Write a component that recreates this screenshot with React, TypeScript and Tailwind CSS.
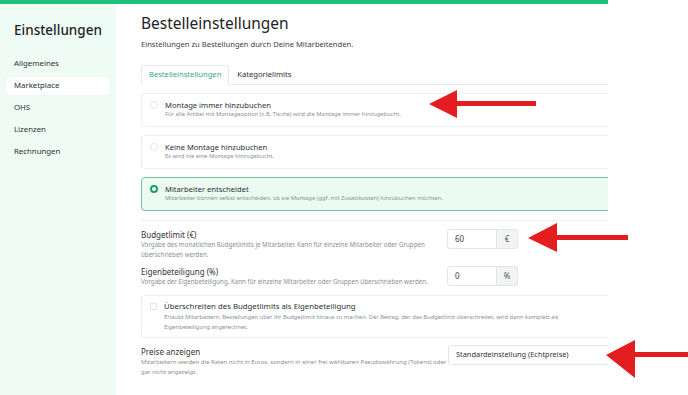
import { type ReactNode } from 'react';

const navItems = ['Allgemeines', 'Marketplace', 'OHS', 'Lizenzen', 'Rechnungen'];

const montageOptions = [
  {
    title: 'Montage immer hinzubuchen',
    text: 'Für alle Artikel mit Montageoption (z.B. Tische) wird die Montage immer hinzugebucht.',
    selected: false
  },
  {
    title: 'Keine Montage hinzubuchen',
    text: 'Es wird nie eine Montage hinzugebucht.',
    selected: false
  },
  {
    title: 'Mitarbeiter entscheidet',
    text: 'Mitarbeiter können selbst entscheiden, ob sie Montage (ggf. mit Zusatzkosten) hinzubuchen möchten.',
    selected: true
  }
];

function Radio({ checked }: { checked: boolean }) {
  return checked ? (
    <span className="mt-[1px] h-[8px] w-[8px] shrink-0 rounded-full border-[2px] border-[#1e9e63] bg-white" />
  ) : (
    <span className="mt-[1px] h-[8px] w-[8px] shrink-0 rounded-full border border-[#e3e6e8] bg-white" />
  );
}

function SettingRow({ label, children, field }: { label: string; children: ReactNode; field: ReactNode }) {
  return (
    <div className="flex items-start">
      <div className="w-[300px] shrink-0">
        <p className="text-[8px] leading-[11px] text-[#333]">{label}</p>
        <p className="whitespace-nowrap text-[6.2px] leading-[10px] text-[#8a8f94]">{children}</p>
      </div>
      <div className="ml-[6px]">{field}</div>
    </div>
  );
}

function AddonInput({ value, unit }: { value: string; unit: string }) {
  return (
    <div className="flex h-[20px]">
      <div className="flex w-[50px] items-center rounded-l-[3px] border border-[#e3e6e8] bg-white pl-[7px] text-[8px] text-[#444]">
        {value}
      </div>
      <div className="flex w-[21px] items-center justify-center rounded-r-[3px] border border-l-0 border-[#e3e6e8] bg-[#f2f3f4] text-[8px] text-[#555]">
        {unit}
      </div>
    </div>
  );
}

export default function App() {
  return (
    <div
      className="relative h-[395px] w-[688px] overflow-hidden bg-white"
      style={{ fontFamily: '"Noto Sans", "Open Sans", sans-serif' }}
    >
      <div className="flex h-full w-[608px] flex-col overflow-hidden">
        <div className="h-[4px] w-full shrink-0 bg-[#1fc07c]" />
        <div className="flex min-h-0 flex-1">
          <aside className="w-[116px] shrink-0 bg-[#effcf6] px-[6px] pt-[15px]">
            <h2 className="pl-[8px] text-[13.5px] font-medium leading-[22px] text-[#1f2328]">Einstellungen</h2>
            <nav className="mt-[14px] flex flex-col gap-[4px]">
              {navItems.map((item) => (
                <div
                  key={item}
                  className={`flex h-[18px] items-center rounded-[4px] pl-[8px] text-[7.8px] text-[#2b2f33] ${
                    item === 'Marketplace' ? 'bg-white shadow-[0_0_2px_rgba(0,0,0,0.06)]' : ''
                  }`}
                >
                  {item}
                </div>
              ))}
            </nav>
          </aside>

          <main className="min-w-0 flex-1 overflow-hidden pl-[25px] pt-[8px]">
            <div className="w-[500px]">
              <h1 className="text-[15.5px] leading-[22px] text-[#1f2328]">Bestelleinstellungen</h1>
              <p className="mt-[4px] text-[7.6px] leading-[12px] text-[#3d4247]">
                Einstellungen zu Bestellungen durch Deine Mitarbeitenden.
              </p>

              <div className="mt-[15px] flex h-[20px] border-b border-[#e6e8ea]">
                <div className="-mb-[1px] flex items-center rounded-t-[3px] border border-b-white border-[#e6e8ea] bg-white px-[7px] text-[7.6px] text-[#37a979]">
                  Bestelleinstellungen
                </div>
                <div className="flex items-center px-[8px] text-[7.6px] text-[#2b2f33]">Kategorielimits</div>
              </div>

              <div className="mt-[8px] flex flex-col gap-[8px]">
                {montageOptions.map((option) => (
                  <div
                    key={option.title}
                    className={`flex h-[34px] gap-[7px] rounded-[4px] border pl-[8px] pt-[6px] ${
                      option.selected ? 'border-[#72c39c] bg-[#ecfbf2]' : 'border-[#eceef0] bg-white'
                    }`}
                  >
                    <Radio checked={option.selected} />
                    <div>
                      <p className="text-[7.6px] leading-[10px] text-[#2b2f33]">{option.title}</p>
                      <p className="text-[5.8px] leading-[9px] text-[#8a8f94]">{option.text}</p>
                    </div>
                  </div>
                ))}
              </div>

              <div className="mt-[9px] border-t border-[#eceef0] pt-[8px]">
                <SettingRow label="Budgetlimit (€)" field={<AddonInput value="60" unit="€" />}>
                  Vorgabe des monatlichen Budgetlimits je Mitarbeiter. Kann für einzelne Mitarbeiter oder Gruppen
                  <br />
                  überschrieben werden.
                </SettingRow>
                <div className="mt-[6px]">
                  <SettingRow label="Eigenbeteiligung (%)" field={<AddonInput value="0" unit="%" />}>
                    Vorgabe der Eigenbeteiligung. Kann für einzelne Mitarbeiter oder Gruppen überschrieben werden.
                  </SettingRow>
                </div>
              </div>

              <div className="mt-[8px] flex h-[43px] gap-[7px] rounded-[4px] border border-[#eceef0] bg-white pl-[8px] pt-[5px]">
                <span className="mt-[2px] h-[7px] w-[7px] shrink-0 rounded-[1px] border border-[#dfe2e5] bg-white" />
                <div>
                  <p className="text-[7.8px] leading-[10px] text-[#2b2f33]">
                    Überschreiten des Budgetlimits als Eigenbeteiligung
                  </p>
                  <p className="mt-[1px] whitespace-nowrap text-[5.8px] leading-[10px] text-[#8a8f94]">
                    Erlaubt Mitarbeitern, Bestellungen über ihr Budgetlimit hinaus zu machen. Der Betrag, der das
                    Budgetlimit überschreitet, wird dann komplett als
                    <br />
                    Eigenbeteiligung angerechnet.
                  </p>
                </div>
              </div>

              <div className="mt-[8px] flex items-start">
                <div className="w-[300px] shrink-0">
                  <p className="text-[8px] leading-[11px] text-[#333]">Preise anzeigen</p>
                  <p className="whitespace-nowrap text-[6px] leading-[10px] text-[#8a8f94]">
                    Mitarbeitern werden die Raten nicht in Euros, sondern in einer frei wählbaren Pseudowährung
                    (Tokens) oder
                    <br />
                    gar nicht angezeigt.
                  </p>
                </div>
                <div className="ml-[7px] -mt-[1px] flex h-[20px] w-[200px] items-center rounded-[3px] border border-[#e3e6e8] bg-white pl-[7px] text-[7.4px] text-[#333]">
                  Standardeinstellung (Echtpreise)
                </div>
              </div>
            </div>
          </main>
        </div>
      </div>

      <svg
        className="pointer-events-none absolute left-0 top-0"
        width="688"
        height="395"
        viewBox="0 0 688 395"
      >
        <g fill="#e41e20">
          <polygon points="429,104 457,90 457,101 536,101 536,106 457,106 457,118" />
          <polygon points="528,238 557,223 557,235 628,235 628,240 557,240 557,252" />
          <polygon points="606,355 635,340 635,352 688,352 688,357 635,357 635,378" />
        </g>
      </svg>
    </div>
  );
}
